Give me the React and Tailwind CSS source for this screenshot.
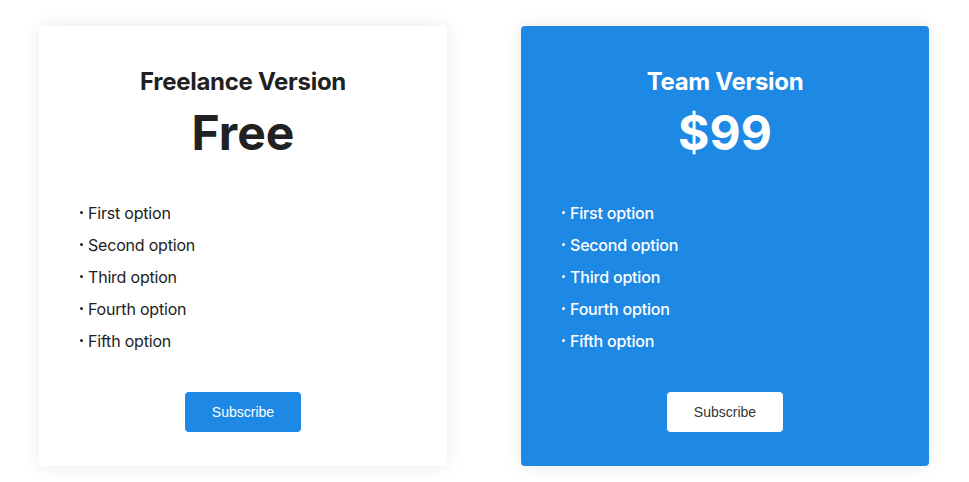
import React from "react";

const options = ["First option", "Second option", "Third option", "Fourth option", "Fifth option"];

function Card({ title, price, blue }) {
  return (
    <div
      className={`w-[408px] h-[440px] rounded-[4px] flex flex-col items-center pt-[40px] shadow-[0_0_18px_rgba(0,0,0,0.09)] ${
        blue ? "bg-[#1e88e5] text-white" : "bg-white text-[#212121]"
      }`}
    >
      <h2 className="text-[24px] leading-[32px] font-bold tracking-[-0.3px]">{title}</h2>
      <div className="mt-[11px] text-[48px] leading-[48px] font-bold">{price}</div>
      <ul className="self-stretch mt-[40px] px-[40px] flex flex-col">
        {options.map((o) => (
          <li
            key={o}
            className={`flex items-center h-[32px] text-[16px] tracking-[-0.2px] ${blue ? "font-medium" : "font-normal"}`}
          >
            <span className="inline-block w-[3px] h-[3px] rounded-full bg-current ml-[1px] mr-[5px] -mt-[1px]"></span>
            <span>{o}</span>
          </li>
        ))}
      </ul>
      <button
        className={`mt-[35px] w-[116px] h-[40px] rounded-[4px] text-[14px] font-['Liberation_Sans',Arial,sans-serif] ${
          blue ? "bg-white text-[#333]" : "bg-[#1e88e5] text-white"
        }`}
      >
        Subscribe
      </button>
    </div>
  );
}

export default function App() {
  return (
    <div className="w-[969px] h-[482px] bg-white font-['Inter',sans-serif] flex pl-[39px] pt-[26px] gap-[74px]">
      <Card title="Freelance Version" price="Free" />
      <Card title="Team Version" price="$99" blue />
    </div>
  );
}
